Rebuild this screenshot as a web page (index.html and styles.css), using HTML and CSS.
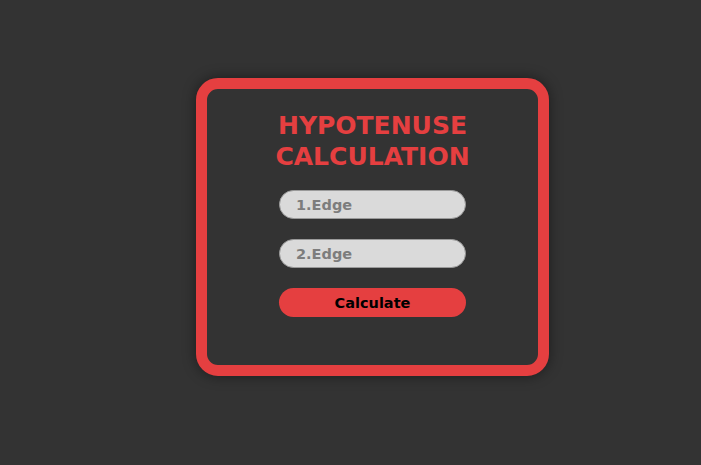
FILE: index.html
```html
<!DOCTYPE html>
<html lang="en">
<head>
<meta charset="utf-8">
<title>Hypotenuse Calculation</title>
<link rel="stylesheet" href="styles.css">
</head>
<body>
<main class="page">
  <section class="card">
    <h1 class="title">HYPOTENUSE<br>CALCULATION</h1>
    <form class="form">
      <input class="field" type="text" placeholder="1.Edge">
      <input class="field" type="text" placeholder="2.Edge">
      <button class="btn" type="button">Calculate</button>
    </form>
  </section>
</main>
</body>
</html>
```
FILE: styles.css
```css
html, body {
  margin: 0;
  padding: 0;
  background: #333333;
  height: 100%;
}
.page {
  padding: 78px 0 0 196px;
}
.card {
  box-sizing: border-box;
  width: 353px;
  height: 298px;
  border: 11px solid #e53f40;
  border-radius: 22px;
  background: #333333;
  box-shadow: 0 0 14px rgba(0, 0, 0, 0.45);
  padding-top: 21px;
  display: flex;
  flex-direction: column;
  align-items: center;
  font-family: "DejaVu Sans", Verdana, sans-serif;
}
.title {
  margin: 0;
  color: #e53f40;
  font-size: 25px;
  line-height: 31px;
  font-weight: bold;
  text-align: center;
}
.form {
  margin-top: 18px;
  display: flex;
  flex-direction: column;
  gap: 20px;
  width: 187px;
}
.field {
  box-sizing: border-box;
  height: 29px;
  width: 100%;
  border: 1px solid #9a9a9a;
  border-radius: 15px;
  background: #dadada;
  padding: 0 0 0 16px;
  font-family: "DejaVu Sans", Verdana, sans-serif;
  font-weight: bold;
  font-size: 14.5px;
  color: #333;
  outline: none;
}
.field::placeholder {
  color: #7d7d7d;
}
.btn {
  box-sizing: border-box;
  height: 29px;
  width: 100%;
  border: none;
  border-radius: 15px;
  background: #e53f40;
  color: #000;
  font-family: "DejaVu Sans", Verdana, sans-serif;
  font-weight: bold;
  font-size: 14.5px;
  padding: 0;
}
```
